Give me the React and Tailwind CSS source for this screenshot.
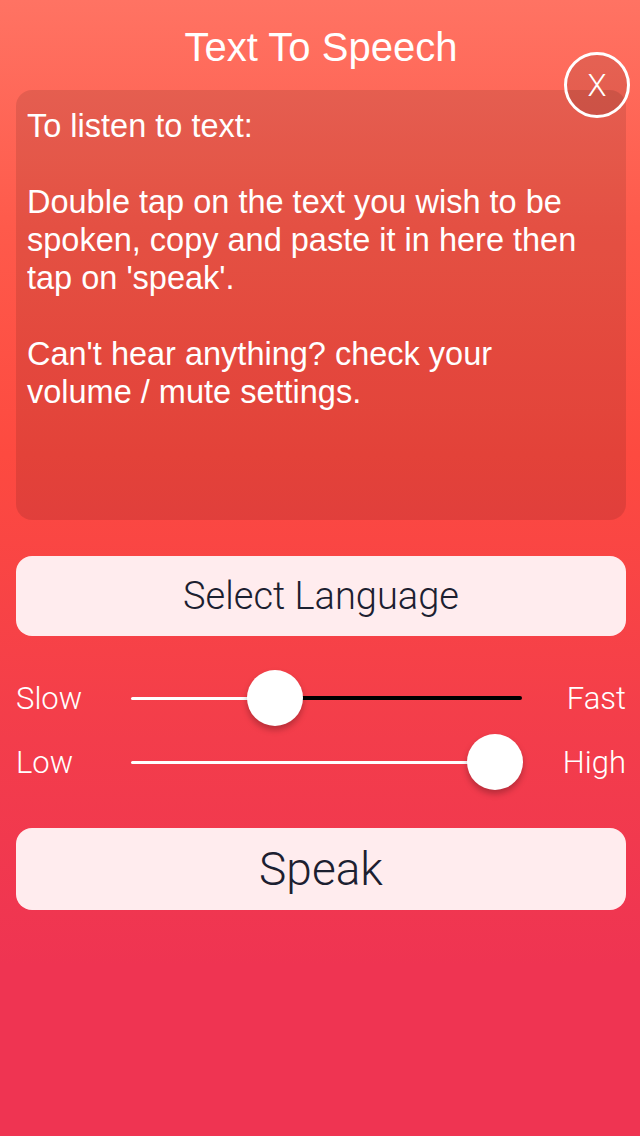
import React, { useState } from "react";

const sans = { fontFamily: "'Liberation Sans', Arial, sans-serif" };

const Slider = ({ left, right, value, fillDark }) => {
  return (
    <div className="grid grid-cols-[115px_1fr_104px] items-center h-[64px]">
      <span className="font-['Roboto',sans-serif] font-light text-[31px] text-white leading-none">
        {left}
      </span>
      <div className="relative h-[3px] flex items-center">
        <div className="h-[3px] bg-white rounded-l-full" style={{ width: `${value}%` }}></div>
        <div className={`flex-1 rounded-r-full ${fillDark ? "bg-black h-[4px]" : "bg-white h-[3px]"}`}></div>
        {/* thumb */}
        <div
          className="absolute top-1/2 w-[56px] h-[56px] -translate-x-1/2 -translate-y-1/2 rounded-full bg-white shadow-[0_4px_6px_rgba(0,0,0,0.25)]"
          style={{ left: `${value}%` }}
        ></div>
      </div>
      <span className="font-['Roboto',sans-serif] font-light text-[31px] text-white leading-none text-right">
        {right}
      </span>
    </div>
  );
};

const App = () => {
  const [speed] = useState(36.8);
  const [pitch] = useState(93);

  return (
    <div className="w-[640px] h-[1136px] overflow-hidden bg-[linear-gradient(180deg,#ff7363_0%,#fe5a4b_20%,#fd4a40_40%,#f33d4b_65%,#ef3452_85%,#ef3452_100%)] pl-4 pr-[14px] relative">
      {/* Header */}
      <div className="h-[90px] pt-1 flex items-center justify-center">
        <h1 style={sans} className="text-white text-[40px] leading-none">
          Text To Speech
        </h1>
      </div>

      {/* Instructions panel */}
      <div className="relative">
        <div
          style={sans}
          className="h-[430px] rounded-[16px] bg-black/10 pt-[17px] pl-[11px] pr-2 text-white text-[32.5px] leading-[38px]"
        >
          <p>To listen to text:</p>
          <p className="mt-[38px]">
            Double tap on the text you wish to be
            <br />
            spoken, copy and paste it in here then
            <br />
            tap on 'speak'.
          </p>
          <p className="mt-[38px]">
            Can't hear anything? check your
            <br />
            volume / mute settings.
          </p>
        </div>
        {/* close button */}
        <button className="absolute -top-[38px] -right-[4px] w-[66px] h-[66px] rounded-full border-[3px] border-white bg-black/10 flex items-center justify-center">
          <span className="font-['Roboto',sans-serif] font-light text-white text-[31px] leading-none">X</span>
        </button>
      </div>

      {/* Select language */}
      <button className="mt-[36px] w-full h-[80px] rounded-[16px] bg-[#ffecee] flex items-center justify-center">
        <span className="font-['Roboto',sans-serif] font-light text-[38px] text-[#1c2030] leading-none">
          Select Language
        </span>
      </button>

      {/* Sliders */}
      <div className="mt-[30px] flex flex-col">
        <Slider left="Slow" right="Fast" value={speed} fillDark />
        <Slider left="Low" right="High" value={pitch} />
      </div>

      {/* Speak */}
      <button className="mt-[34px] w-full h-[82px] rounded-[16px] bg-[#ffecee] flex items-center justify-center">
        <span className="font-['Roboto',sans-serif] font-light text-[46px] text-[#1c2030] leading-none">
          Speak
        </span>
      </button>
    </div>
  );
};

export default App;
